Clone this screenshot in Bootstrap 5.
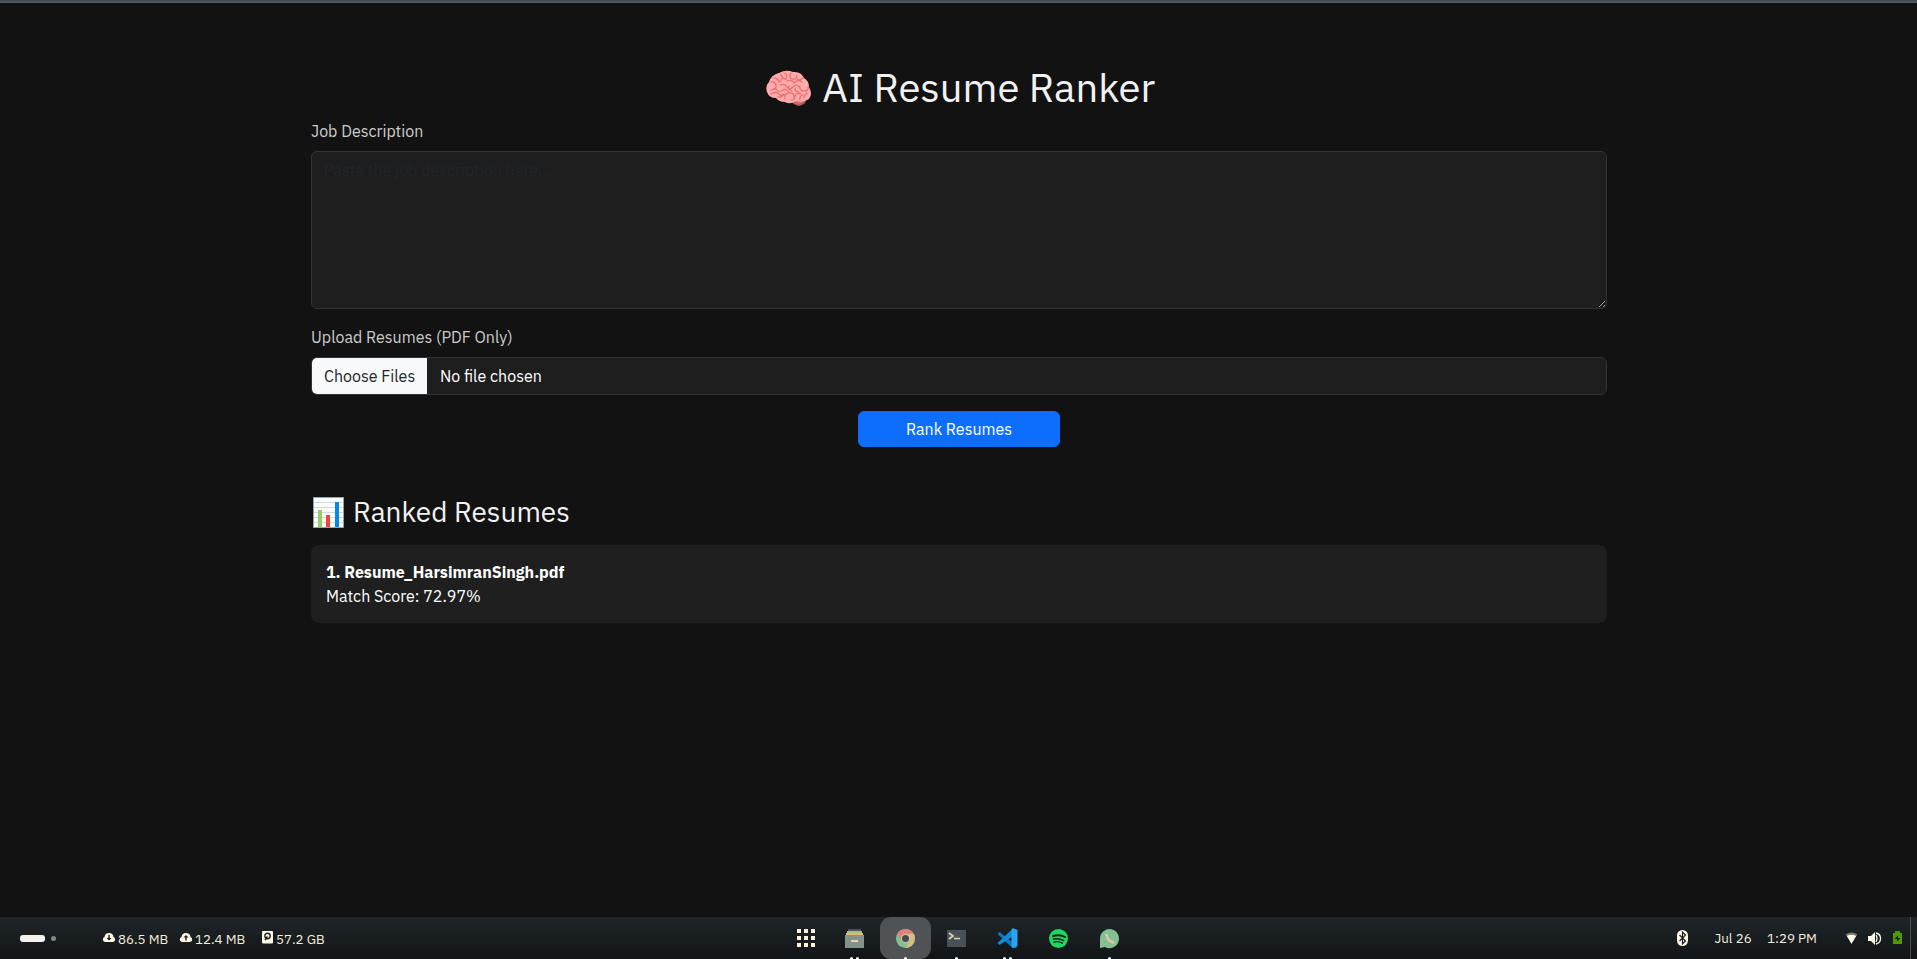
<!DOCTYPE html>
<html lang="en">
<head>
<meta charset="utf-8">
<meta name="viewport" content="width=device-width, initial-scale=1">
<title>AI Resume Ranker</title>
<link href="https://cdn.jsdelivr.net/npm/bootstrap@5.3.0/dist/css/bootstrap.min.css" rel="stylesheet">
<style>
html,body{height:100%}
body{background:#121212;color:#f1f1f1;font-family:"IBM Plex Sans",Roboto,"Liberation Sans",sans-serif;overflow:hidden;font-size:16px}
.topline{height:3px;background:#435059;border-bottom:1px solid #596269}
main{padding-top:60px;padding-left:1px}
h1{font-size:40px;line-height:48px;font-weight:400;margin-bottom:8px;padding-left:3px}
h1 svg{margin-right:10.5px;margin-top:2px}
h3{font-size:28px;font-weight:400;line-height:34px;margin-bottom:16px}
.form-label{color:#ccc;line-height:24px}
.form-control,.form-control:focus{background:#1e1e1e;border-color:#333;color:#fff}
textarea.form-control::placeholder{color:#212529}
.picker{height:38px;border:1px solid #333;border-radius:6px;background:#1e1e1e;overflow:hidden;line-height:36px;color:#fff}
.picker-btn{width:115px;background:#f8f9fa;color:#212529;padding-left:12px}
.picker-text{padding-left:13px}
.rank-btn{width:202px;height:36px;padding:0;line-height:34px}
.result{background:#1f1f1f;border-radius:8px;padding:15px;color:#fff;height:78px;line-height:24px}
.dock{height:42px;background:linear-gradient(#1f2529,#121517);color:#f4eedc;font-size:13.33px;display:grid;grid-template-columns:780px 360px 777px}
.dock svg{display:block;flex:none}
.seg{height:42px;line-height:42px}
.stat{padding-top:1px}
</style>
</head>
<body class="d-flex flex-column">
<div class="topline flex-shrink-0"></div>
<main class="flex-grow-1">
<div class="container" style="max-width:1320px">
<h1 class="d-flex justify-content-center align-items-center">
<svg width="46" height="38" viewBox="0 0 46 38"><path fill="#ba5c5c" d="M24 31q5-3 12-2l4 1q1 5-7 7-6-1-9-6z"/><path stroke="#d98080" fill="none" d="M27 31q5 4 11 0M29 34q4 1 7-1"/><path fill="#ffabab" d="M3 13Q5 6 13 4q7-4 14-1 8-1 11 6 5 3 5 9 4 7 0 12-6 4-13 2-6 4-11 1-6 0-9-4-7 0-9-6-2-6 2-10z"/><g fill="none" stroke="#e96f70" stroke-width="1.25" stroke-linecap="round"><path d="M5 13q4-1 5 3t-5 5M8 9q4 0 5 4 4-2 3-6M15 5q0 5 5 5 2-5-2-6M25 4q-3 4 1 6 5 1 5-4M21 12q5-2 7 2 4-4 8-1M37 9q-3 3-6 1M14 16q5-2 7 2t6 0 7 1M10 20q2 4 7 1 3-2 6 2M5 25q5-3 8 0t7 0M12 28q4 1 5-3M19 30q-1-5 4-6t5 4M25 31q4 0 4-4 2-4 6-2M34 17q-1 5 4 5t4-4M34 31q-1-4 3-5M41 24q-3 2-3 5M23 17q-1 4 3 5M29 19q0 4 4 4"/></g></svg>
<span>AI Resume Ranker</span></h1>
<label class="form-label d-block mb-2">Job Description</label>
<textarea class="form-control d-block mb-3" rows="6" placeholder="Paste the job description here..."></textarea>
<label class="form-label d-block mb-2">Upload Resumes (PDF Only)</label>
<div class="picker d-flex mb-3"><span class="picker-btn">Choose Files</span><span class="picker-text">No file chosen</span></div>
<div class="text-center mb-5" style="height:36px"><button class="btn btn-primary rank-btn">Rank Resumes</button></div>
<h3 class="d-flex align-items-center"><svg class="me-2" width="34" height="34" viewBox="0 0 34 34"><path fill="#fff" stroke="#90a4ae" d="M2.500 2.500h30v30h-30z"/><path stroke="#cfd8dc" d="M3 7.500h29M3 12.500h29M3 17.500h29M3 22.500h29M3 27.500h29"/><path fill="#9ccc65" d="M7 15h4v17H7z"/><path fill="#f44336" d="M15 20h4v12h-4z"/><path fill="#0288f1" d="M24 7h4v25h-4z"/></svg><span>Ranked Resumes</span></h3>
<div class="result"><strong>1. Resume_HarsimranSingh.pdf</strong><br><span>Match Score: 72.97%</span></div>
</div>
</main>
<footer class="dock flex-shrink-0">
<div class="seg d-flex align-items-center" style="padding-left:20px">
<svg width="82" height="42"><rect y="18" width="25" height="7" rx="3" fill="#f4f2f0"/><circle cx="33.500" cy="21.500" r="2.500" fill="#83878a"/></svg>
<svg width="14" height="16" viewBox="0 0 14 16"><path fill="#fff8e7" d="M3 12a2.600 2.600 0 0 1-.5-5Q3 3 7 3t4.500 4a2.600 2.600 0 0 1-.5 5z"/><path fill="#1b2023" d="M6.300 5h1.400v3H9.500L7 10.500 4.500 8h1.800z"/></svg><span class="stat" style="width:63px;padding-left:2px">86.5 MB</span>
<svg width="14" height="16" viewBox="0 0 14 16"><path fill="#fff8e7" d="M3 12a2.600 2.600 0 0 1-.5-5Q3 3 7 3t4.500 4a2.600 2.600 0 0 1-.5 5z"/><path fill="#1b2023" d="M6.300 10.500h1.400v-3H9.500L7 5 4.500 7.500h1.800z"/></svg><span class="stat" style="width:69px;padding-left:2px">12.4 MB</span>
<svg width="11" height="14" viewBox="0 0 11 14"><rect width="11" height="12.500" rx="1" fill="#fff8e7"/><circle cx="5.500" cy="5" r="2.700" stroke="#1b2023" stroke-width="1.400" fill="none"/><path stroke="#1b2023" stroke-width="1.500" d="M3 9l2.500-3.500"/></svg><span class="stat" style="padding-left:3px">57.2 GB</span>
</div>
<div class="seg"><svg width="360" height="42" viewBox="0 7 360 42">
<path fill="#fff4df" d="M17 19h4v4h-4zm7 0h4v4h-4zm7 0h4v4h-4zM17 26h4v4h-4zm7 0h4v4h-4zm7 0h4v4h-4zM17 33h4v4h-4zm7 0h4v4h-4zm7 0h4v4h-4z"/>
<path fill="#4c5558" d="M68 19h13v3H68z"/><path fill="#a7c080" d="M67 21h15v3H67z"/><path fill="#dbbc7f" d="M66 23h17v3H66z"/><path fill="#859289" d="M65 25h19v13H65z"/><path fill="#e5d3b5" d="M71 30h7v2h-7z"/>
<rect x="100" y="7" width="51" height="42" rx="11" fill="#505356"/>
<circle cx="125.500" cy="28.500" r="9.500" fill="#83c092"/><path fill="#e67e80" d="M117.300 23.800a9.500 9.500 0 0 1 16.400 0h-8.200l-4 7z"/><path fill="#dbbc7f" d="M133.700 23.800a9.500 9.500 0 0 1-8.200 14.200l4.200-7.200-1-7z"/><circle cx="125.500" cy="28.500" r="4.600" fill="#d3c6aa"/><circle cx="125.500" cy="28.500" r="3.500" fill="#414b50"/>
<path fill="#495156" d="M167 20h19v17h-19z"/><path fill="none" stroke="#ddd0b3" stroke-width="1.700" d="M169 23l4 3-4 3M174 28.500h6"/>
<g transform="translate(19.500 0)"><path fill="#0879c2" d="M198 24l2-2 17 13v3h-4z"/><path fill="#108bd5" d="M198 33l15-14 4 1v4l-17 11z"/><path fill="#2ba4ee" d="M213 18l5 2v16l-5 2-1-2V20z"/></g>
<circle cx="278.500" cy="28.500" r="9.500" fill="#1ed760"/><g fill="none" stroke="#17221b" stroke-linecap="round"><path stroke-width="2" d="M273 26q7-2 12 1"/><path stroke-width="1.600" d="M273.500 29q6-1 10 1.500"/><path stroke-width="1.300" d="M274 32q5-1 8.500 1.300"/></g>
<path fill="#83c092" d="M320 38V28.500a9.500 9.500 0 1 1 5 8.500z"/><path fill="none" stroke="#dfc9ac" stroke-width="2.500" stroke-linecap="round" d="M326.500 25q1 6 7 7.500"/>
<g fill="#fff"><circle cx="71.500" cy="48.500" r="1.500"/><circle cx="77.500" cy="48.500" r="1.500"/><circle cx="125.500" cy="48.500" r="1.500"/><circle cx="176.500" cy="48.500" r="1.500"/><circle cx="224.500" cy="48.500" r="1.500"/><circle cx="230.500" cy="48.500" r="1.500"/><circle cx="329.500" cy="48.500" r="1.500"/></g>
</svg></div>
<div class="seg d-flex align-items-center" style="padding-left:537px">
<svg width="37" height="42" viewBox="0 0 37 42"><rect y="13" width="11" height="16" rx="5.500" fill="#fff8e7"/><path fill="none" stroke="#1b2023" stroke-width="1.200" d="M2.500 18l6 6-3 2.800V15.200l3 2.800-6 6"/></svg>
<span style="width:53px;padding-left:.5px">Jul 26</span><span style="width:78px">1:29 PM</span>
<svg width="72" height="42" viewBox="0 0 72 42"><path fill="#777974" d="M.5 17.500q6-4 12 0l-2 2.500q-4-2-8 0z"/><path fill="#fff8e7" d="M1.800 19q4.700-2.500 9.400 0l-4.700 8z"/><path fill="#fff8e7" d="M23 19h3l4-4v13l-4-4h-3z"/><path fill="none" stroke="#fff8e7" stroke-width="1.300" d="M31 18q2 3 0 7M31 16q4.500 1 4.500 5.500T31 27"/><path fill="#4e9a06" d="M48 16h9v11h-9zM50 14h5v2h-5z"/><path fill="#16210c" d="M53 18.500l-3.500 3.500h2.500v2.500l3.500-3.500H53z"/><path fill="#465057" d="M65 0h1v42h-1z"/></svg>
</div>
</footer>
<script src="https://cdn.jsdelivr.net/npm/bootstrap@5.3.0/dist/js/bootstrap.bundle.min.js"></script>
</body>
</html>
